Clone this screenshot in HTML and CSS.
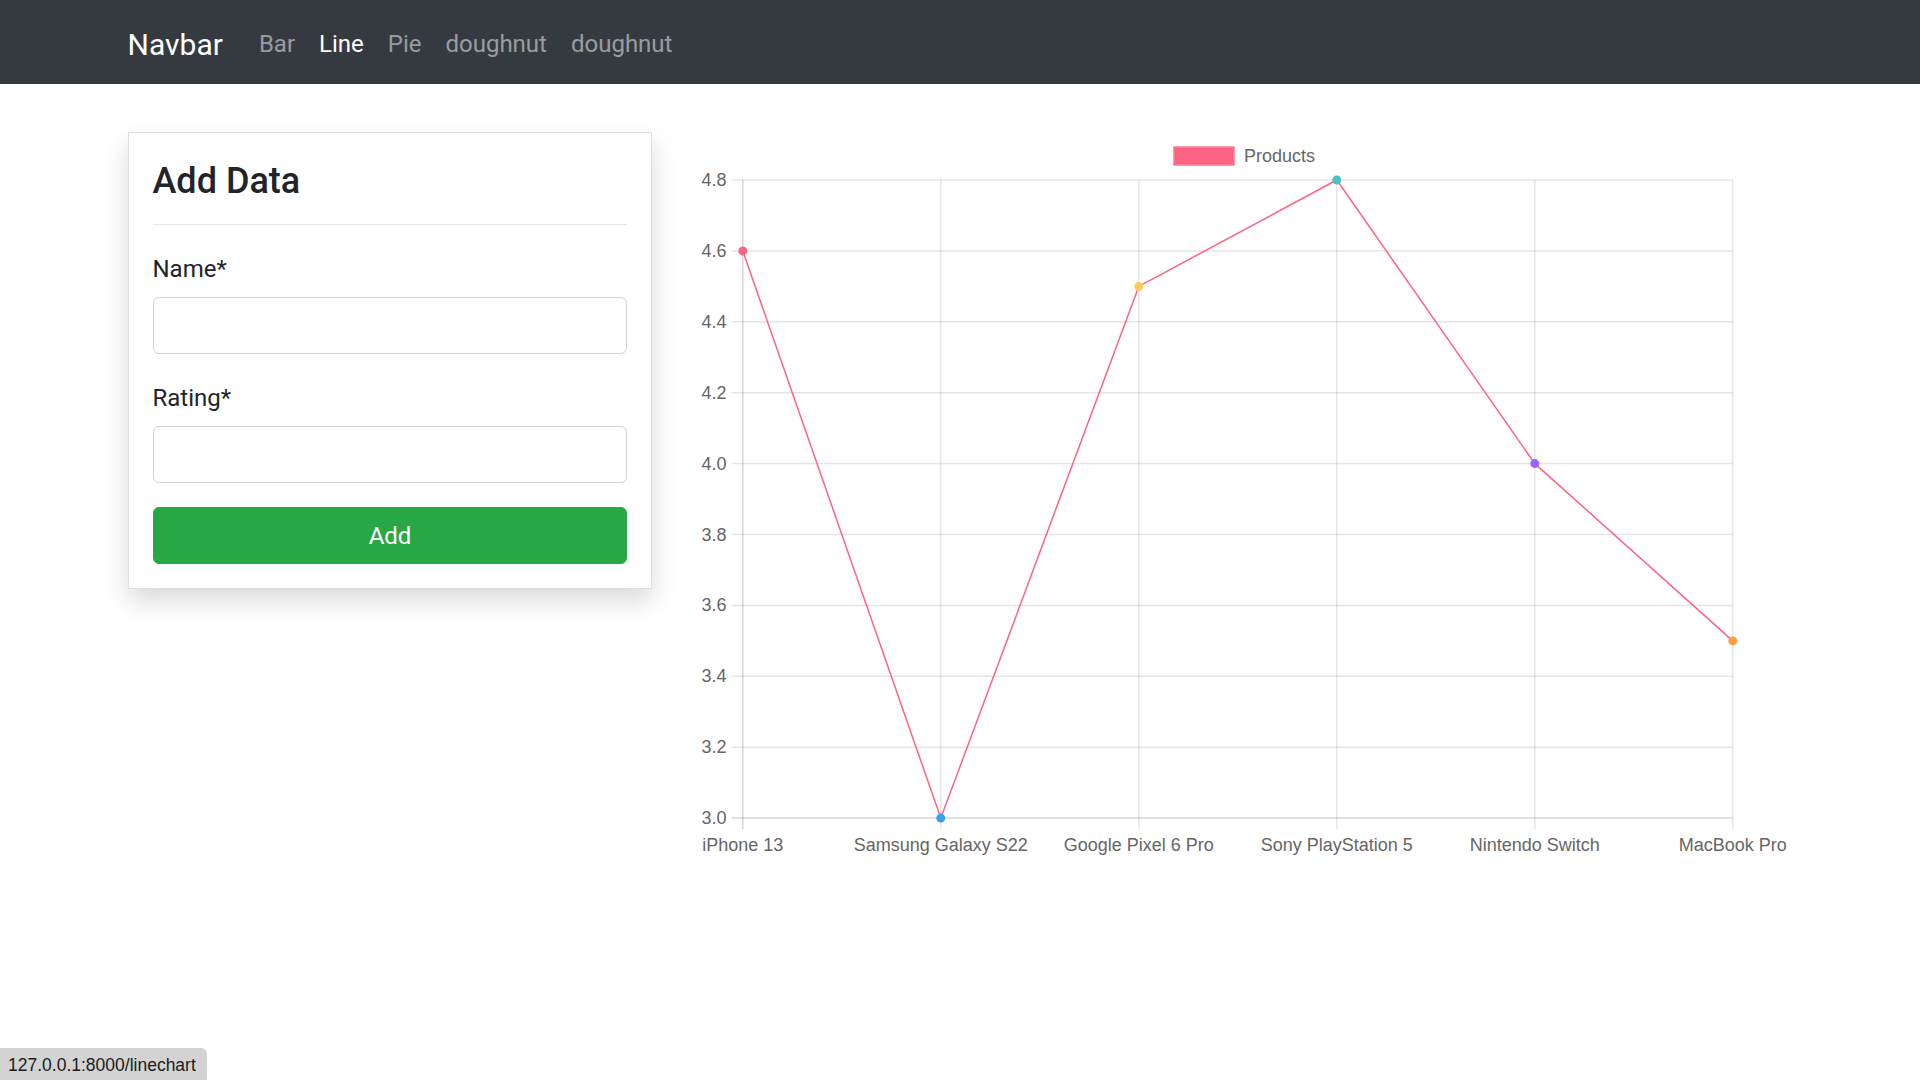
FILE: index.html
```html
<!DOCTYPE html>
<html lang="en">
<head>
<meta charset="utf-8">
<title>Line Chart</title>
<link rel="stylesheet" href="styles.css">
</head>
<body>
<nav class="navbar">
  <div class="container nav-inner">
    <a class="brand" href="#">Navbar</a>
    <ul class="nav-list">
      <li><a class="nav-link" href="#">Bar</a></li>
      <li><a class="nav-link active" href="#">Line</a></li>
      <li><a class="nav-link" href="#">Pie</a></li>
      <li><a class="nav-link" href="#">doughnut</a></li>
      <li><a class="nav-link" href="#">doughnut</a></li>
    </ul>
  </div>
</nav>

<main class="container content">
  <div class="row">
    <div class="col-4">
      <div class="card">
        <h4 class="card-title">Add Data</h4>
        <hr class="divider">
        <div class="form-group">
          <label class="form-label" for="name">Name*</label>
          <input class="form-control" id="name" type="text">
        </div>
        <div class="form-group">
          <label class="form-label" for="rating">Rating*</label>
          <input class="form-control" id="rating" type="text">
        </div>
        <button class="btn-add" type="button">Add</button>
      </div>
    </div>
    <div class="col-8">
      <svg class="chart" width="1095" height="740" viewBox="696.5 132 1095 740" xmlns="http://www.w3.org/2000/svg">
        <!-- legend -->
        <rect x="1173.5" y="147" width="60" height="18" fill="#ff6384" stroke="#ff7d96" stroke-width="1.5"/>
        <text class="tick" x="1243.5" y="161.5">Products</text>

        <!-- horizontal grid -->
        <g stroke="rgba(0,0,0,0.1)" stroke-width="1.5">
          <line x1="731" y1="180" x2="1732.3" y2="180"/>
          <line x1="731" y1="250.9" x2="1732.3" y2="250.9"/>
          <line x1="731" y1="321.8" x2="1732.3" y2="321.8"/>
          <line x1="731" y1="392.7" x2="1732.3" y2="392.7"/>
          <line x1="731" y1="463.6" x2="1732.3" y2="463.6"/>
          <line x1="731" y1="534.5" x2="1732.3" y2="534.5"/>
          <line x1="731" y1="605.4" x2="1732.3" y2="605.4"/>
          <line x1="731" y1="676.3" x2="1732.3" y2="676.3"/>
          <line x1="731" y1="747.2" x2="1732.3" y2="747.2"/>
          <line x1="731" y1="818.1" x2="1732.3" y2="818.1" stroke="rgba(0,0,0,0.16)"/>
        </g>
        <!-- vertical grid -->
        <g stroke="rgba(0,0,0,0.1)" stroke-width="1.5">
          <line x1="742.3" y1="180" x2="742.3" y2="829" stroke="rgba(0,0,0,0.16)"/>
          <line x1="940.3" y1="180" x2="940.3" y2="829"/>
          <line x1="1138.3" y1="180" x2="1138.3" y2="829"/>
          <line x1="1336.3" y1="180" x2="1336.3" y2="829"/>
          <line x1="1534.3" y1="180" x2="1534.3" y2="829"/>
          <line x1="1732.3" y1="180" x2="1732.3" y2="829"/>
        </g>

        <!-- y labels -->
        <g class="tick" text-anchor="end">
          <text x="726" y="186">4.8</text>
          <text x="726" y="256.9">4.6</text>
          <text x="726" y="327.8">4.4</text>
          <text x="726" y="398.7">4.2</text>
          <text x="726" y="469.6">4.0</text>
          <text x="726" y="540.5">3.8</text>
          <text x="726" y="611.4">3.6</text>
          <text x="726" y="682.3">3.4</text>
          <text x="726" y="753.2">3.2</text>
          <text x="726" y="824.1">3.0</text>
        </g>

        <!-- x labels -->
        <g class="tick" text-anchor="middle">
          <text x="742.3" y="851">iPhone 13</text>
          <text x="940.3" y="851">Samsung Galaxy S22</text>
          <text x="1138.3" y="851">Google Pixel 6 Pro</text>
          <text x="1336.3" y="851">Sony PlayStation 5</text>
          <text x="1534.3" y="851">Nintendo Switch</text>
          <text x="1732.3" y="851">MacBook Pro</text>
        </g>

        <!-- data line -->
        <polyline fill="none" stroke="#ff6384" stroke-width="1.5" stroke-linejoin="round"
          points="742.3,250.9 940.3,818.1 1138.3,286.4 1336.3,180 1534.3,463.6 1732.3,640.9"/>
        <circle cx="742.3" cy="250.9" r="4.5" fill="#ff6384"/>
        <circle cx="940.3" cy="818.1" r="4.5" fill="#36a2eb"/>
        <circle cx="1138.3" cy="286.4" r="4.5" fill="#ffcd56"/>
        <circle cx="1336.3" cy="180" r="4.5" fill="#4bc0c0"/>
        <circle cx="1534.3" cy="463.6" r="4.5" fill="#9966ff"/>
        <circle cx="1732.3" cy="640.9" r="4.5" fill="#ff9f40"/>
      </svg>
    </div>
  </div>
</main>

<div class="status">127.0.0.1:8000/linechart</div>
</body>
</html>
```

FILE: styles.css
```css
* {
  box-sizing: border-box;
}

html, body {
  margin: 0;
  padding: 0;
}

body {
  font-family: Roboto, "Segoe UI", "Liberation Sans", Arial, sans-serif;
  font-size: 24px;
  line-height: 1.5;
  color: #212529;
  background: #fff;
}

.container {
  width: 1710px;
  margin: 0 auto;
  padding: 0 22.5px;
}

/* Navbar */
.navbar {
  background: #343a40;
  padding: 14px 0 10px;
  height: 84px;
}

.nav-inner {
  display: flex;
  align-items: center;
}

.brand {
  font-size: 30px;
  line-height: 45px;
  padding: 7.5px 0;
  margin-right: 24px;
  color: #fff;
  text-decoration: none;
  white-space: nowrap;
}

.nav-list {
  display: flex;
  list-style: none;
  margin: 0;
  padding: 0;
}

.nav-link {
  display: block;
  padding: 12px 12px;
  font-size: 24px;
  line-height: 36px;
  color: rgba(255, 255, 255, 0.5);
  text-decoration: none;
}

.nav-link.active {
  color: #fff;
}

/* Content */
.content {
  margin-top: 48px;
}

.row {
  display: flex;
  margin: 0 -22.5px;
}

.col-4 {
  flex: 0 0 33.3333%;
  max-width: 33.3333%;
  padding: 0 22.5px;
}

.col-8 {
  flex: 0 0 66.6667%;
  max-width: 66.6667%;
  padding: 0 22.5px;
}

/* Card */
.card {
  background: #fff;
  border: 1px solid rgba(0, 0, 0, 0.125);
  box-shadow: 0 12px 24px rgba(0, 0, 0, 0.15);
  padding: 24px;
}

.card-title {
  margin: 0;
  font-size: 36px;
  font-weight: 500;
  line-height: 1.2;
  padding-top: 3px;
  margin-bottom: -3px;
}

.divider {
  border: 0;
  border-top: 1px solid rgba(0, 0, 0, 0.1);
  margin: 24px 0;
}

.form-group {
  margin-bottom: 24px;
}

.form-label {
  display: block;
  line-height: 36px;
  padding-top: 2px;
  margin-bottom: 10px;
}

.form-control {
  display: block;
  width: 100%;
  height: 57px;
  padding: 9px 18px;
  font-size: 24px;
  font-family: inherit;
  color: #495057;
  background: #fff;
  border: 1.5px solid #ced4da;
  border-radius: 6px;
}

.btn-add {
  display: block;
  width: 100%;
  height: 57px;
  padding: 9px 18px;
  font-family: inherit;
  font-size: 24px;
  line-height: 36px;
  color: #fff;
  background: #28a745;
  border: 1.5px solid #28a745;
  border-radius: 6px;
  text-align: center;
}

/* Chart */
.chart {
  display: block;
}

.tick {
  font-family: "Liberation Sans", Arial, sans-serif;
  font-size: 18px;
  fill: #666;
}

/* Browser status bubble */
.status {
  position: fixed;
  left: 0;
  bottom: 0;
  height: 32px;
  padding: 0 11px 0 8px;
  background: #d3d3d3;
  border-top-right-radius: 6px;
  font-family: "Liberation Sans", Arial, sans-serif;
  font-size: 17.5px;
  line-height: 34px;
  color: #1b1b1b;
}
```
